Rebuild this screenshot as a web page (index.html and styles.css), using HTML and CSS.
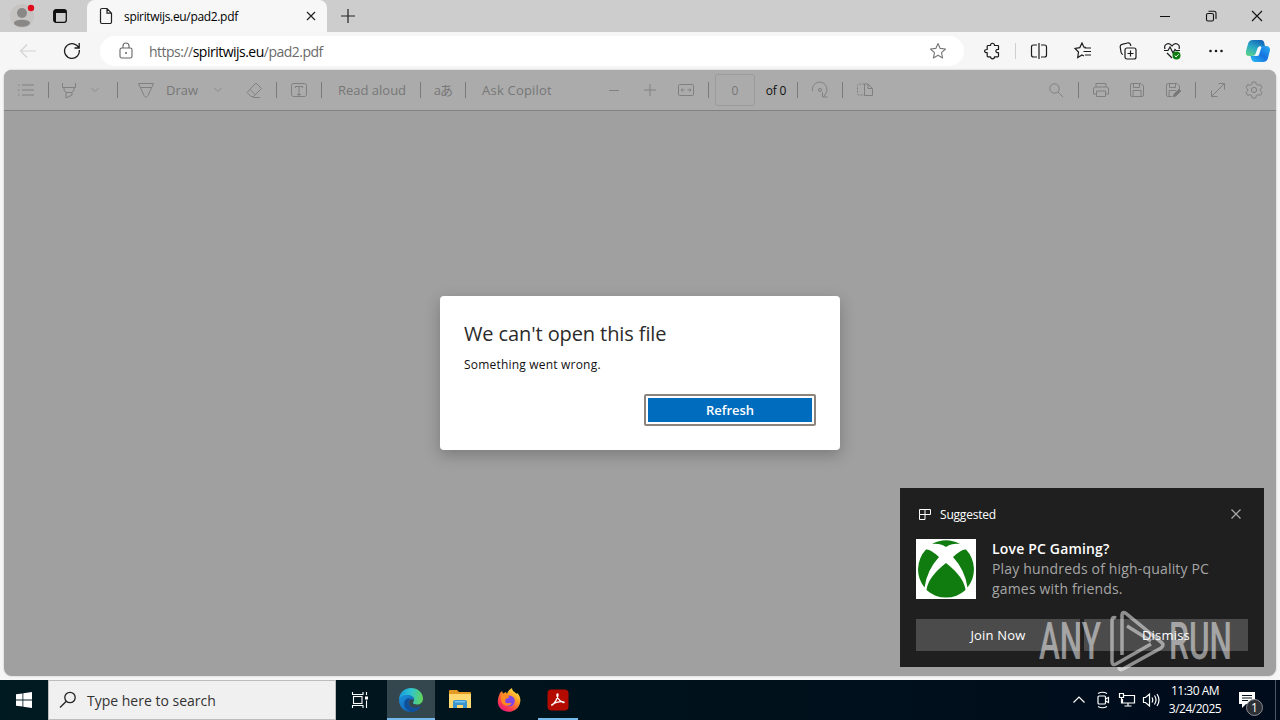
FILE: index.html
```html
<!DOCTYPE html>
<html lang="en">
<head>
    <meta charset="UTF-8">
    <title>spiritwijs.eu/pad2.pdf</title>
    <link rel="stylesheet" href="styles.css">
</head>
<body>
    <div class="desktop">
        <header class="tab-strip">
            <div class="profile">
                <svg width="28" height="28" viewBox="0 0 28 28"><circle cx="14" cy="14" r="12" fill="#c6c4c3"/><circle cx="14" cy="11" r="5" fill="#8a8886"/><path d="M6 21c0-4.500 16-4.500 16 0-1 5-15 5-16 0z" fill="#8a8886"/><circle cx="23" cy="6" r="3.200" fill="#e00b1c"/></svg>
            </div>
            <div class="workspaces">
                <svg width="16" height="16" viewBox="0 0 16 16"><rect x="1.700" y="1.700" width="12.600" height="12.600" rx="2.200" fill="none" stroke="#111" stroke-width="1.300"/><path d="M2 2h12v3H2zM2 5h2v9H2z" fill="#111"/></svg>
            </div>
            <div class="tab">
                <svg class="tab-icon" width="14" height="18" viewBox="0 0 14 18"><path d="M3 1.500h5l4.500 4.700V15a1.500 1.500 0 0 1-1.500 1.500H3A1.500 1.500 0 0 1 1.500 15V3A1.500 1.500 0 0 1 3 1.500zM8 1.500V6.200h4.500" fill="none" stroke="#222" stroke-width="1.200"/></svg>
                <span class="tab-title">spiritwijs.eu/pad2.pdf</span>
                <svg class="tab-close" width="10" height="10" viewBox="0 0 10 10"><path d="M1 1l8 8M9 1L1 9" stroke="#222" stroke-width="1.2"/></svg>
            </div>
            <svg class="new-tab" width="16" height="16" viewBox="0 0 16 16"><path d="M8 1v14M1 8h14" stroke="#222" stroke-width="1.2"/></svg>
            <div class="window-buttons">
                <span><svg width="12" height="12" viewBox="0 0 12 12"><path d="M1 6.500h10" stroke="#111"/></svg></span>
                <span><svg width="12" height="12" viewBox="0 0 12 12"><rect x="1.500" y="3.500" width="7" height="7.500" rx="1.500" fill="none" stroke="#111" stroke-width="1.100"/><path d="M3.500 1.300H9a2 2 0 0 1 2 2V9" fill="none" stroke="#111" stroke-width="1.100"/></svg></span>
                <span><svg width="12" height="12" viewBox="0 0 12 12"><path d="M1 1l10 10M11 1L1 11" stroke="#111" stroke-width="1.1"/></svg></span>
            </div>
        </header>

        <div class="address-row">
            <span class="nav-btn"><svg width="18" height="18" viewBox="0 0 18 18"><path d="M17 9H2M8 2.500L1.500 9 8 15.500" fill="none" stroke="#d2d2d2" stroke-width="1.200"/></svg></span>
            <span class="nav-btn"><svg width="18" height="18" viewBox="0 0 18 18"><path d="M16.300 8A7.400 7.400 0 1 1 13.600 3.200L16 5.500M16.200 1v5H11.500" fill="none" stroke="#1b1b1b" stroke-width="1.300"/></svg></span>
            <div class="omnibox">
                <svg width="14" height="18" viewBox="0 0 14 18"><rect x="1" y="6" width="12" height="10" rx="1.800" fill="none" stroke="#666" stroke-width="1.100"/><path d="M4 6V4a3 3 0 0 1 6 0v2" fill="none" stroke="#666" stroke-width="1.100"/><circle cx="7" cy="11" r="1" fill="#666"/></svg>
                <span class="url">https://<b>spiritwijs.eu</b>/pad2.pdf</span>
                <svg class="star" width="18" height="18" viewBox="0 0 18 18"><path d="M9 1.500l2.200 4.900 5.300.600-4 3.600 1.100 5.300L9 13.300l-4.600 2.600 1.100-5.300-4-3.600 5.300-.600z" fill="none" stroke="#777" stroke-width="1.100" stroke-linejoin="round"/></svg>
            </div>
            <div class="browser-actions">
                <span class="action"><svg width="18" height="18" viewBox="0 0 18 18"><path d="M5 3.500h2.500c-.300-3 4.300-3 4 0h3.500q.500 0 .500.500v3.500c-3.500-.500-3.500 3.600 0 3.200V14q0 .800-.800.800H11.500c0 2.700-4 2.700-4 0H5q-.800 0-.800-.800v-3.300c-3.500.300-3.500-3.500 0-3.200V4.300q0-.800.800-.800z" fill="none" stroke="#1b1b1b" stroke-width="1.200" stroke-linejoin="round"/></svg></span>
                <i class="action-sep"></i>
                <span class="action"><svg width="18" height="18" viewBox="0 0 18 18"><path d="M7 3H3.500Q1.500 3 1.500 5v8q0 2 2 2H7M11 3h3.500q2 0 2 2v8q0 2-2 2H11M9 1v16" fill="none" stroke="#1b1b1b" stroke-width="1.200"/></svg></span>
                <span class="action"><svg width="18" height="18" viewBox="0 0 18 18"><path d="M12 5.500L10 5.200 8 1 5.800 5.600 1 6.400 4.500 10 3.700 15.500 8 13l2 1M10.500 6H17M9.500 9.500H17M11 13h6" fill="none" stroke="#1b1b1b" stroke-width="1.200"/></svg></span>
                <span class="action"><svg width="18" height="18" viewBox="0 0 18 18"><rect x="6" y="6" width="11" height="11" rx="2" fill="none" stroke="#1b1b1b" stroke-width="1.200"/><path d="M11.500 8.500v6M8.500 11.500h6M4 12.500Q2.300 12.300 2 10L1.200 5Q1 2.800 3 2.300L8.500 1q2.200-.400 3 1.500l.300 1.500" fill="none" stroke="#1b1b1b" stroke-width="1.200"/></svg></span>
                <span class="action"><svg width="18" height="18" viewBox="0 0 18 18"><path d="M2 7C.300 2 6-.500 9 4c3-4.500 8.700-2 7 3M4 11l5 5M1 8.500h4L7 5l3 6 2-3.500 1 1h4" fill="none" stroke="#1b1b1b" stroke-width="1.200"/><circle cx="13.500" cy="13.500" r="4" fill="#107c10"/><path d="M11.700 13.600l1.400 1.300 2.500-2.600" fill="none" stroke="#fff"/></svg></span>
                <span class="action"><svg width="18" height="18" viewBox="0 0 18 18" fill="#1b1b1b"><circle cx="3.500" cy="9" r="1.300"/><circle cx="9" cy="9" r="1.300"/><circle cx="14.500" cy="9" r="1.300"/></svg></span>
                <svg class="copilot" width="26" height="24" viewBox="0 0 26 24">
                    <defs>
                        <linearGradient id="cp1" x1="0.700" y1="0" x2="0.200" y2="1"><stop offset="0" stop-color="#1465b8"/><stop offset=".5" stop-color="#2aa9c5"/><stop offset="1" stop-color="#5bd18b"/></linearGradient>
                        <linearGradient id="cp2" x1="1" y1="0" x2="0" y2="1"><stop offset="0" stop-color="#29adf0"/><stop offset=".5" stop-color="#1673e1"/><stop offset="1" stop-color="#2dc1f5"/></linearGradient>
                    </defs>
                    <path d="M8 1h8q3 0 3.500 4l.500 2h-4q-3 0-4 4l-1 3q-1 3-4 3H4q-4 0-3-5L3 5q1-4 5-4z" fill="url(#cp1)"/>
                    <path d="M16 7h5q4 0 4 4l-2 8q-1 4-5 4h-8q-3 0-4-4l-.500-2H9q3 0 4-4z" fill="url(#cp2)"/>
                    <path d="M13.500 8h3l-2.500 8q-.600 1-2 1H10l3-8z" fill="#f1f8fc"/>
                </svg>
            </div>
        </div>

        <main class="viewer">
            <div class="pdf-toolbar">
                <span class="tool wide"><svg width="18" height="14" viewBox="0 0 18 14"><path d="M5 2h12M5 7h12M5 12h12M1 2h1.500M1 7h1.500M1 12h1.500"/></svg></span>
                <i class="sep"></i>
                <span class="tool highlight"><svg width="16" height="18" viewBox="0 0 16 18"><path d="M1.500 2v4.500h13V2M3 6.500V9l2 2.500h6L13 9V6.500M5 11.500V17l6-3v-2.500"/></svg></span>
                <svg class="chev" width="12" height="8" viewBox="0 0 12 8"><path d="M2.500 2L6 5.500 9.500 2"/></svg>
                <i class="sep after-menu"></i>
                <span class="tool pen"><svg width="18" height="18" viewBox="0 0 18 18"><path d="M1.500 2.500h15L11 14.500l-2 2-2-2zM3.500 6.500h11"/></svg></span>
                <span class="draw-label">Draw</span>
                <span class="tool draw-menu"><svg class="chev" width="12" height="8" viewBox="0 0 12 8"><path d="M2.500 2L6 5.500 9.500 2"/></svg></span>
                <span class="tool eraser"><svg width="18" height="18" viewBox="0 0 18 18"><path d="M11 2l5.500 5.500-8 8H6l-4-4zM5 8.500l5 5M8 16.500h7"/></svg></span>
                <i class="sep"></i>
                <span class="tool wide"><svg width="18" height="16" viewBox="0 0 18 16"><rect x="1.500" y="1.500" width="15" height="13" rx="2"/><path d="M5.500 6V4.500h7V6M9 4.500V14.500M7 12.500h4"/></svg></span>
                <i class="sep"></i>
                <span class="tool read-aloud">Read aloud</span>
                <i class="sep"></i>
                <span class="tool wide translate">aあ</span>
                <i class="sep"></i>
                <span class="tool ask-copilot">Ask Copilot</span>
                <span class="tool zoom-out"><svg width="14" height="14" viewBox="0 0 14 14"><path d="M2 7.500h10"/></svg></span>
                <span class="tool"><svg width="14" height="14" viewBox="0 0 14 14"><path d="M7 1v12M1 7h12"/></svg></span>
                <span class="tool"><svg width="18" height="14" viewBox="0 0 18 14"><rect x="1.500" y="1.500" width="15" height="11" rx="1"/><path d="M4 7h3.500M10.500 7H14M5.500 5.500L4 7l1.500 1.500M12.500 5.500L14 7l-1.500 1.500"/></svg></span>
                <i class="sep before-page"></i>
                <span class="page-input">0</span>
                <span class="page-count">of 0</span>
                <i class="sep"></i>
                <span class="tool wide"><svg width="18" height="18" viewBox="0 0 18 18"><path d="M1.500 10a7.300 7.300 0 1 1 13.500 2l-2 3.500M11.500 11.500v4.500h5"/><circle cx="9" cy="9" r="1.500"/></svg></span>
                <i class="sep"></i>
                <span class="tool wide"><svg width="18" height="16" viewBox="0 0 18 16"><path d="M8.500 2H3Q1.500 2 1.500 3.500v8Q1.500 13 3 13h5.500" stroke-dasharray="2 1.200"/><path d="M8.500 2H12l4.500 4.500v7H8.500zM12 2v4.500h4.500"/></svg></span>
                <div class="toolbar-right">
                    <span class="tool"><svg width="16" height="16" viewBox="0 0 16 16"><circle cx="6.500" cy="6.500" r="4.700"/><path d="M10 10l5 5"/></svg></span>
                    <i class="sep spaced"></i>
                    <span class="tool"><svg width="18" height="16" viewBox="0 0 18 16"><path d="M4 5V1.500h10V5M4.500 12H1.500V7q0-2 2-2h11q2 0 2 2v5h-3M4.500 9h9v5.500h-9z"/></svg></span>
                    <span class="tool"><svg width="16" height="16" viewBox="0 0 16 16"><path d="M3 1.500h9L14.500 4v9q0 1.500-1.500 1.500H3Q1.500 14.500 1.500 13V3Q1.500 1.500 3 1.500zM4.500 1.500V5.500h6v-4M4 14.500V8.500h8v6"/></svg></span>
                    <span class="tool"><svg width="16" height="16" viewBox="0 0 16 16"><path d="M7 14.500H3Q1.500 14.500 1.500 13V3Q1.500 1.500 3 1.500h9L14.500 4v3M4.500 1.500V5.500h6v-4M4 14.500V8.500h7"/><path d="M8 15l1-3 5-5 2 2-5 5z" fill="#777"/></svg></span>
                    <i class="sep spaced"></i>
                    <span class="tool"><svg width="16" height="16" viewBox="0 0 16 16"><path d="M1.500 14.500l13-13M8.500 1.500h6v6M1.500 8.500v6h6"/></svg></span>
                    <span class="tool"><svg width="18" height="18" viewBox="0 0 18 18"><path d="M7.300 1h3.400l.600 2.300 1.700 1 2.300-.700 1.700 3-1.700 1.600v1.600l1.700 1.600-1.700 3-2.300-.700-1.700 1-.600 2.300H7.300l-.600-2.300-1.700-1-2.300.700-1.700-3 1.700-1.600V8.200L1 6.600l1.700-3 2.300.700 1.700-1z"/><circle cx="9" cy="9" r="2.600"/></svg></span>
                </div>
            </div>

            <div class="overlay">
                <div class="dialog">
                    <h1>We can't open this file</h1>
                    <p>Something went wrong.</p>
                    <button class="refresh">Refresh</button>
                </div>
            </div>
        </main>

        <footer class="taskbar">
            <div class="start"><svg width="16" height="16" viewBox="0 0 16 16" fill="#fff"><path d="M0 2.300L6.500 1.400V7.600H0zM7.300 1.300L16 0V7.600H7.300zM0 8.400h6.500v6.200L0 13.700zM7.300 8.400H16V16L7.300 14.700z"/></svg></div>
            <div class="search">
                <svg width="18" height="18" viewBox="0 0 18 18"><circle cx="11" cy="6.500" r="5.200" fill="none" stroke="#222" stroke-width="1.300"/><path d="M7.300 10.300L1 16.500" stroke="#222" stroke-width="1.300"/></svg>
                <span>Type here to search</span>
            </div>
            <div class="task-view"><svg width="18" height="18" viewBox="0 0 18 18" fill="none" stroke="#fff" stroke-width="1.100"><path d="M1.500 1v2.500h10.500V1M1.500 17v-2.500h10.500V17M15.500 1v3M15.500 9.500V17"/><rect x="2.500" y="5.500" width="8.500" height="7"/><path d="M14 7h3" stroke-width="3"/></svg></div>
            <div class="app active"><svg width="26" height="26" viewBox="0 0 26 26">
                <defs>
                    <linearGradient id="eg" x1="0" y1=".3" x2="1" y2=".4"><stop offset="0" stop-color="#1799df"/><stop offset=".5" stop-color="#30c5ce"/><stop offset="1" stop-color="#62d45b"/></linearGradient>
                    <linearGradient id="eb" x1="0" y1="0" x2="1" y2="1"><stop offset="0" stop-color="#1b91dd"/><stop offset="1" stop-color="#0b54a8"/></linearGradient>
                </defs>
                <path d="M1 13C1 6 6 1 13 1s12 5 12 10.500c0 4-3 6-6 6-2.500 0-4-.800-4-1.700s1-1.200 1-3c0-3-3-4.500-6-4.500-4 0-8 2-9 4.700z" fill="url(#eg)"/>
                <path d="M1 13C2 10 5 8 9 8c4 0 7 2 7 4.800-3-1.600-6 1-5.500 4 .500 4 5.500 5.700 12 2.700C20 23.500 17 25 13 25 6 25 1 20 1 13z" fill="url(#eb)"/>
                <path d="M8.500 12C4 15 6 22.500 13 25c4 0 7.500-2 9.500-5.500-7 3-12 .500-12-3.500 0-2 1-3.500 2.500-4.200-1.500-.700-3-.700-4.500.200z" fill="#10509a"/>
            </svg></div>
            <div class="app"><svg width="24" height="22" viewBox="0 0 24 22"><path d="M1 2q0-1 1-1h7l2 2h11q1 0 1 1v14H1z" fill="#e49b23"/><path d="M1 5h22v14H1z" fill="#ffd870"/><path d="M5 19v-6q0-2 2-2h10q2 0 2 2v6h-4v-3H9v3z" fill="#3d94cf"/><path d="M7 12h10v1.500H7z" fill="#75c7ef"/></svg></div>
            <div class="app"><svg width="24" height="24" viewBox="0 0 24 24">
                <defs><linearGradient id="ff" x1=".9" y1="0" x2=".2" y2="1"><stop offset="0" stop-color="#fff44f"/><stop offset=".4" stop-color="#ff9a24"/><stop offset=".75" stop-color="#ff3c4a"/><stop offset="1" stop-color="#e31587"/></linearGradient></defs>
                <path d="M3 5l2-2 1 2.500 3-1.500 1 2c1-3 3-5 5-6 0 3 3 4 5 6l.500-1C23 8 24 11 23 15c-1 5-6 9-11.500 8.800C5 23.500.500 19 .800 13 1 9.500 2 8 3 5z" fill="url(#ff)"/><circle cx="12.300" cy="13" r="5.500" fill="#8145e6"/><path d="M4 7c4-1 7-.500 8 2 0 1-2 1.500-3.500 2 0 2-1 3 1 4 2 .800 4-.500 5 .500-2 3-7 3-9 0-1.500-2-2-5-1.500-8.500z" fill="#ff8a22"/>
            </svg></div>
            <div class="app open"><svg width="22" height="22" viewBox="0 0 22 22"><rect x=".5" y=".5" width="21" height="21" rx="4" fill="#b30b00"/><path d="M5 16c2-.500 6-7 6-10 0-2-1.500-1-1 1 .500 3 5 7 7 6.500 1-1.300-6-1-9 .500-2.500 1.200-4 2.300-3 2z" fill="none" stroke="#fff" stroke-width="1.300"/></svg></div>

            <div class="tray">
                <span><svg width="14" height="14" viewBox="0 0 14 14"><path d="M1.500 9.500L7 4l5.500 5.500"/></svg></span>
                <span><svg width="16" height="18" viewBox="0 0 16 18"><rect x="3" y="5" width="7.500" height="8" rx="1"/><path d="M10.500 8l3-1.500v5l-3-1.500M3 2.500Q7.500 0 12 2.500M3 15.500Q7.500 18 12 15.500"/></svg></span>
                <span><svg width="18" height="16" viewBox="0 0 18 16"><path d="M6 3.500h10.500v7.500h-12V7M10 11v3M6.500 14h7M1.500 1.500h4v4h-4zM3.500 5.500v5.500h1"/></svg></span>
                <span><svg width="18" height="16" viewBox="0 0 18 16"><path d="M1.500 5.500h2l4-3.500v12l-4-3.500h-2zM10 5.500q1.500 2.500 0 5M12.500 3.500q3 4.500 0 9M15 2q4 6 0 12"/></svg></span>
            </div>
            <div class="clock"><span>11:30 AM</span><span>3/24/2025</span></div>
            <div class="notifications">
                <svg width="18" height="18" viewBox="0 0 18 18"><path d="M1 1h16v12H8l-4 4v-4H1z" fill="#fff"/><path d="M4 4.500h10M4 7h10M4 9.500h6" stroke="#06101f"/></svg>
                <span class="badge">1</span>
            </div>
        </footer>

        <aside class="toast">
            <div class="toast-head">
                <svg width="12" height="12" viewBox="0 0 12 12" fill="none" stroke="#fff"><path d="M.500 1.500H11.500V6.500H.500zM.500 6.500v5H6V1.500"/></svg>
                <span>Suggested</span>
                <svg class="toast-close" width="12" height="12" viewBox="0 0 12 12"><path d="M1.500 1.500l9 9M10.500 1.500l-9 9" stroke="#aaa" stroke-width="1.200"/></svg>
            </div>
            <div class="toast-body">
                <svg width="60" height="60" viewBox="0 0 60 60">
                    <rect width="60" height="60" fill="#fff"/>
                    <g fill="#107c10">
                        <path d="M16 5Q30-2.500 44 5 36 4 30 8 24 4 16 5z"/>
                        <path d="M10 10.500Q14 9.500 23 18 11 31 8.500 48.500A28.800 28.800 0 0 1 10 10.500z"/>
                        <path d="M50 10.500Q46 9.500 37 18 49 31 51.500 48.500A28.800 28.800 0 0 0 50 10.500z"/>
                        <path d="M30 24Q48 38 49.500 51A28.800 28.800 0 0 1 10.500 51Q12 38 30 24z"/>
                    </g>
                </svg>
                <div class="toast-text">
                    <strong>Love PC Gaming?</strong>
                    <span>Play hundreds of high-quality PC</span>
                    <span>games with friends.</span>
                </div>
            </div>
            <div class="toast-actions">
                <button>Join Now</button>
                <button>Dismiss</button>
            </div>
        </aside>

        <svg class="watermark" width="210" height="66" viewBox="0 0 210 66">
            <g class="watermark-text">
                <text x="3" y="50" textLength="62" lengthAdjust="spacingAndGlyphs">ANY</text>
                <text x="133" y="50" textLength="63" lengthAdjust="spacingAndGlyphs">RUN</text>
            </g>
            <path d="M86 46V6q0-4 4-1.500L125 33q4 3 0 6L87 60q-4 2-4-2M91 17l24 15M80 9q-4-2-4 3v40q0 5 4 3l35-20" fill="none" stroke="#fff" stroke-width="3.500"/>
        </svg>
    </div>
</body>
</html>
```
FILE: styles.css
```css
* {
    box-sizing: border-box;
}
body {
    margin: 0;
    font-family: "Open Sans", "Noto Sans", sans-serif;
    font-size: 12px;
    color: #1b1b1b;
}
svg {
    flex: none;
    display: block;
}
button {
    font-family: inherit;
    border: 0;
    padding: 0;
}
.desktop {
    position: relative;
    width: 1280px;
    height: 720px;
    overflow: hidden;
    background: #f6f6f6;
    display: flex;
    flex-direction: column;
    white-space: nowrap;
}

/* tabs */
.tab-strip {
    height: 32px;
    flex: none;
    background: #cdcdcd;
    display: flex;
    align-items: center;
}
.profile {
    padding-left: 8px;
    width: 52px;
}
.workspaces {
    width: 35px;
}
.tab {
    width: 240px;
    height: 32px;
    background: #f7f7f7;
    border-radius: 8px 8px 0 0;
    display: flex;
    align-items: center;
    padding: 0 11px 0 12px;
}
.tab-title {
    margin-left: 11px;
    font-size: 12px;
    letter-spacing: -0.33px;
    color: #000;
}
.tab-close {
    margin-left: auto;
}
.new-tab {
    margin-left: 13px;
}
.window-buttons {
    margin-left: auto;
    display: flex;
}
.window-buttons span {
    width: 46px;
    height: 32px;
    display: flex;
    align-items: center;
    justify-content: center;
}

/* address bar */
.address-row {
    height: 38px;
    flex: none;
    display: flex;
    align-items: center;
    padding-left: 6px;
}
.nav-btn {
    width: 44px;
    display: flex;
    justify-content: center;
}
.omnibox {
    width: 864px;
    height: 30px;
    margin-left: 6px;
    border-radius: 15px;
    background: #fff;
    display: flex;
    align-items: center;
    padding: 0 17px 0 19px;
}
.url {
    margin-left: 16px;
    font-size: 14px;
    letter-spacing: -0.51px;
    color: #6b6b6b;
}
.url b {
    font-weight: 400;
    color: #000;
}
.star {
    margin-left: auto;
}
.browser-actions {
    display: flex;
    align-items: center;
    padding-left: 6px;
}
.action {
    width: 44.2px;
    display: flex;
    justify-content: center;
}
.action-sep {
    width: 1px;
    height: 16px;
    margin: 0 1px;
    background: #cfcfcf;
}
.copilot {
    margin-left: 7px;
}

/* pdf viewer */
.viewer {
    position: relative;
    height: 606px;
    flex: none;
    margin: 0 4px 4px;
    border-radius: 8px;
    overflow: hidden;
    background: #a0a0a0;
    box-shadow: 0 0 2px rgba(0,0,0,0.25);
}
.pdf-toolbar {
    height: 41px;
    background: #ababab;
    border-bottom: 1px solid #828282;
    display: flex;
    align-items: center;
    padding-right: 4px;
    font-size: 13px;
    color: #777;
}
.pdf-toolbar svg {
    fill: none;
    stroke: #808080;
    stroke-width: 1;
}
.pdf-toolbar .chev {
    stroke: #8c8c8c;
}
.tool {
    width: 36px;
    flex: none;
    display: flex;
    align-items: center;
    justify-content: center;
}
.wide {
    width: 44px;
}
.sep {
    width: 1px;
    height: 16px;
    flex: none;
    background: #7b7b7b;
}
.highlight {
    width: 40px;
}
.after-menu {
    margin-left: 16px;
}
.pen {
    width: 20px;
    margin-left: 18px;
}
.draw-label {
    width: 32px;
    margin-left: 10px;
}
.draw-menu {
    width: 40px;
}
.eraser {
    width: 32px;
    margin-right: 6px;
}
.read-aloud {
    width: 98px;
    padding-left: 2px;
}
.ask-copilot {
    width: 102px;
    letter-spacing: 0.2px;
}
.translate {
    font-family: "Open Sans", "Noto Sans CJK JP", sans-serif;
    font-size: 13px;
    line-height: 16px;
    letter-spacing: -0.8px;
}
.zoom-out {
    margin-left: 28px;
}
.before-page {
    margin: 0 6px 0 4px;
}
.page-input {
    width: 40px;
    height: 32px;
    border: 1px solid #9b9b9b;
    border-radius: 3px;
    font-size: 12px;
    line-height: 31px;
    text-align: center;
}
.page-count {
    width: 42px;
    text-align: center;
    font-size: 12px;
    letter-spacing: -0.2px;
    color: #111;
}
.toolbar-right {
    margin-left: auto;
    display: flex;
    align-items: center;
}
.spaced {
    margin: 0 4px;
}

/* error dialog */
.overlay {
    position: absolute;
    inset: 0;
    display: flex;
    align-items: center;
    justify-content: center;
}
.dialog {
    width: 400px;
    height: 154px;
    padding: 24px;
    background: #fff;
    border-radius: 4px;
    box-shadow: 0 5px 16px rgba(0,0,0,0.24);
    display: flex;
    flex-direction: column;
}
.dialog h1 {
    margin: 0;
    font-size: 20px;
    line-height: 28px;
    font-weight: 500;
    letter-spacing: -0.1px;
    color: #2b2b2b;
}
.dialog p {
    margin: 7px 0 0;
    font-size: 12px;
    line-height: 20px;
    letter-spacing: 0.2px;
    color: #111;
}
.refresh {
    align-self: flex-end;
    width: 172px;
    height: 32px;
    margin-top: 19px;
    border: 2px solid #8d857d;
    border-radius: 2px;
    background: #006cbe;
    box-shadow: inset 0 0 0 2px #fff;
    color: #fff;
    font-size: 13px;
    font-weight: 600;
}

/* taskbar */
.taskbar {
    height: 40px;
    flex: none;
    display: flex;
    background: linear-gradient(90deg, #001a22, #00131c 45%, #000b1c);
    color: #fff;
}
.start {
    width: 48px;
    display: flex;
    align-items: center;
    justify-content: center;
}
.search {
    width: 288px;
    border: 1px solid #bdbdbd;
    background: #f0f0f0;
    display: flex;
    align-items: center;
    padding-left: 10px;
    color: #333;
    font-size: 14px;
}
.search span {
    margin-left: 10px;
}
.task-view {
    width: 51px;
    display: flex;
    align-items: center;
    justify-content: center;
    padding-right: 3px;
}
.app {
    width: 48px;
    margin-right: 1px;
    display: flex;
    align-items: center;
    justify-content: center;
}
.active {
    background: #34474f;
    border-bottom: 2px solid #76b9ed;
    padding-top: 2px;
}
.open {
    width: 40px;
    margin-left: 4px;
    border-bottom: 2px solid #76b9ed;
    padding-top: 2px;
}
.tray {
    margin-left: auto;
    display: flex;
    align-items: center;
}
.tray span {
    width: 24px;
    display: flex;
    justify-content: center;
}
.tray svg {
    fill: none;
    stroke: #fff;
    stroke-width: 1.2;
}
.clock {
    width: 64px;
    display: flex;
    flex-direction: column;
    align-items: center;
    padding-top: 2px;
    font-size: 12px;
    line-height: 18px;
    letter-spacing: -0.5px;
}
.notifications {
    position: relative;
    width: 49px;
    border-right: 1px solid #4d5863;
    margin-right: 4px;
    padding: 11px 0 0 11px;
}
.badge {
    position: absolute;
    left: 19px;
    top: 19px;
    width: 17px;
    height: 17px;
    border: 1px solid #8b8d91;
    border-radius: 50%;
    background: #2d3035;
    font-size: 12px;
    line-height: 15px;
    text-align: center;
}

/* notification */
.toast {
    position: absolute;
    left: 900px;
    top: 488px;
    width: 364px;
    height: 179px;
    padding: 16px;
    background: #1f1f1f;
    color: #fff;
}
.toast-head {
    height: 20px;
    display: flex;
    align-items: center;
    padding: 0 6px 0 3px;
    font-size: 12px;
}
.toast-head span {
    margin-left: 9px;
    letter-spacing: -0.2px;
}
.toast-close {
    margin-left: auto;
}
.toast-body {
    display: flex;
    margin-top: 15px;
}
.toast-text {
    margin-left: 16px;
    display: flex;
    flex-direction: column;
    align-items: flex-start;
    font-size: 14px;
    line-height: 20px;
    letter-spacing: 0.17px;
    color: #a6a6a6;
}
.toast-text strong {
    font-weight: 600;
    color: #fff;
}
.toast-actions {
    display: flex;
    gap: 4px;
    margin-top: 20px;
}
.toast-actions button {
    flex: 1;
    height: 32px;
    background: #4b4b4b;
    color: #fff;
    font-size: 13px;
    letter-spacing: 0.2px;
}
.watermark {
    position: absolute;
    left: 1036px;
    top: 609px;
    opacity: 0.5;
}
.watermark-text {
    fill: #fff;
    font-family: Roboto, sans-serif;
    font-size: 52px;
    font-weight: 500;
}
```
